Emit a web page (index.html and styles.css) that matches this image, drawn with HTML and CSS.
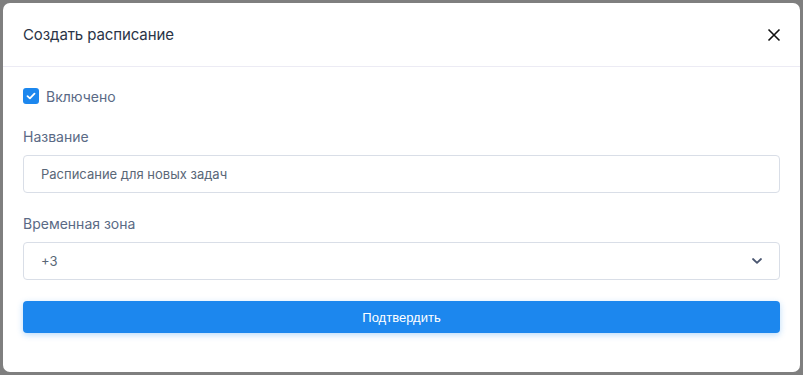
FILE: index.html
```html
<!DOCTYPE html>
<html lang="ru">
<head>
<meta charset="utf-8">
<link rel="stylesheet" href="styles.css">
</head>
<body>
<div class="modal">
  <div class="modal-header">
    <div class="modal-title">Создать расписание</div>
    <button class="close" aria-label="Закрыть">
      <svg width="14" height="14" viewBox="0 0 14 14"><path d="M1.5 1.5L12.5 12.5M12.5 1.5L1.5 12.5" stroke="#111" stroke-width="1.6" fill="none"/></svg>
    </button>
  </div>
  <div class="modal-body">
    <label class="check">
      <span class="box"><svg width="10" height="8" viewBox="0 0 10 8"><path d="M1.5 4.2L3.9 6.4L8.5 1.6" stroke="#fff" stroke-width="1.8" fill="none" stroke-linecap="round" stroke-linejoin="round"/></svg></span>
      <span class="check-label">Включено</span>
    </label>
    <div class="field">
      <div class="label">Название</div>
      <div class="input">Расписание для новых задач</div>
    </div>
    <div class="field">
      <div class="label">Временная зона</div>
      <div class="input select">
        <span>+3</span>
        <svg width="12" height="8" viewBox="0 0 12 8"><path d="M2 2L6 5.8L10 2" stroke="#4a5670" stroke-width="1.8" fill="none" stroke-linecap="round" stroke-linejoin="round"/></svg>
      </div>
    </div>
    <button class="submit">Подтвердить</button>
  </div>
</div>
</body>
</html>
```
FILE: styles.css
```css
html, body {
  margin: 0;
  padding: 0;
}
body {
  background: #7f7f7f;
  padding: 3px;
  font-family: Inter, "Noto Sans", sans-serif;
  height: 375px;
  box-sizing: border-box;
}
.modal {
  width: 797px;
  height: 369px;
  background: #fff;
  border-radius: 7px;
  box-sizing: border-box;
}
.modal-header {
  height: 64px;
  display: flex;
  align-items: center;
  justify-content: space-between;
  padding: 0 18px 0 20px;
  border-bottom: 1px solid #ecebf4;
  box-sizing: border-box;
}
.modal-title {
  font-size: 15px;
  color: #2a3447;
  margin-top: -1px;
  letter-spacing: -0.1px;
}
.close {
  background: none;
  border: 0;
  padding: 0;
  width: 16px;
  height: 16px;
  display: flex;
  align-items: center;
  justify-content: center;
  margin-top: 1px;
}
.modal-body {
  padding: 19px 20px 0 20px;
}
.check {
  display: flex;
  align-items: center;
  gap: 7px;
  height: 20px;
}
.box {
  width: 16px;
  height: 16px;
  border-radius: 3px;
  background: #1c87ee;
  display: flex;
  align-items: center;
  justify-content: center;
}
.check-label {
  font-size: 14px;
  color: #5a6a85;
}
.field {
  margin-top: 21px;
}
.label {
  font-size: 14px;
  color: #5a6a85;
  line-height: 20px;
  margin-bottom: 8px;
}
.input {
  height: 38px;
  border: 1px solid #d9dee7;
  border-radius: 4px;
  box-sizing: border-box;
  padding: 0 17px;
  display: flex;
  align-items: center;
  font-size: 13px;
  color: #5a6778;
}
.select {
  justify-content: space-between;
  padding-right: 16px;
}
.submit {
  display: block;
  width: 100%;
  height: 32px;
  margin-top: 21px;
  border: 0;
  border-radius: 4px;
  background: #1c87ee;
  color: #fff;
  font-family: "Liberation Sans", Arial, sans-serif;
  font-size: 13px;
  box-shadow: 0 2px 6px rgba(28, 135, 238, 0.3);
}
```
